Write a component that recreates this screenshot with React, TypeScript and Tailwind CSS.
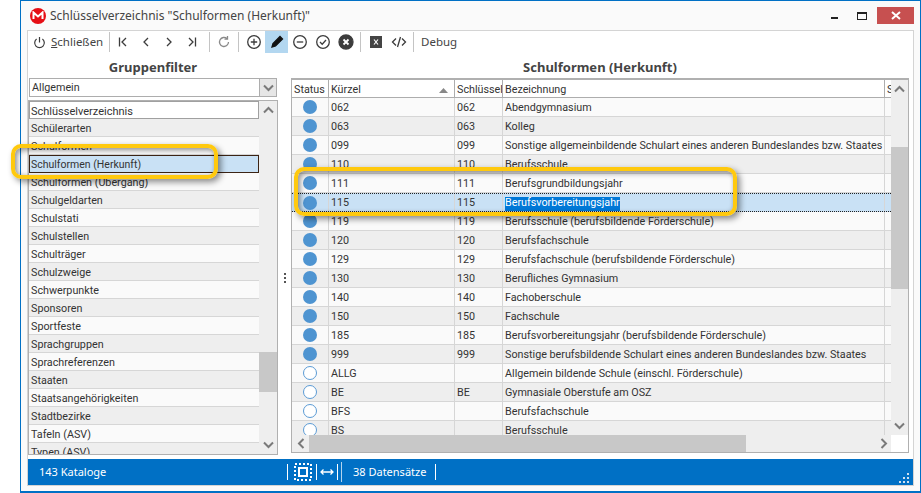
import React from "react";

const left = ["Schülerarten","Schulformen","Schulformen (Herkunft)","Schulformen (Übergang)","Schulgeldarten","Schulstati","Schulstellen","Schulträger","Schulzweige","Schwerpunkte","Sponsoren","Sportfeste","Sprachgruppen","Sprachreferenzen","Staaten","Staatsangehörigkeiten","Stadtbezirke","Tafeln (ASV)","Typen (ASV)"];

const rows: [boolean,string,string,string][] = [
[true,"062","062","Abendgymnasium"],
[true,"063","063","Kolleg"],
[true,"099","099","Sonstige allgemeinbildende Schulart eines anderen Bundeslandes bzw. Staates"],
[true,"110","110","Berufsschule"],
[true,"111","111","Berufsgrundbildungsjahr"],
[true,"115","115","Berufsvorbereitungsjahr"],
[true,"119","119","Berufsschule (berufsbildende Förderschule)"],
[true,"120","120","Berufsfachschule"],
[true,"129","129","Berufsfachschule (berufsbildende Förderschule)"],
[true,"130","130","Berufliches Gymnasium"],
[true,"140","140","Fachoberschule"],
[true,"150","150","Fachschule"],
[true,"185","185","Berufsvorbereitungsjahr (berufsbildende Förderschule)"],
[true,"999","999","Sonstige berufsbildende Schulart eines anderen Bundeslandes bzw. Staates"],
[false,"ALLG","","Allgemein bildende Schule (einschl. Förderschule)"],
[false,"BE","BE","Gymnasiale Oberstufe am OSZ"],
[false,"BFS","","Berufsfachschule"],
[false,"BS","","Berufsschule"],
];

const Sep = ({ c = "" }: { c?: string }) => <div className={`w-px h-[20px] bg-[#c4c4c4] ${c}`} />;
const Chev = ({ d }: { d: string }) => (
  <svg width="11" height="8" viewBox="0 0 11 8"><path d={d} fill="none" stroke="#7a7a7a" strokeWidth="2" /></svg>
);
const Ico = ({ children, w = 23, active = false }: { children: React.ReactNode; w?: number; active?: boolean }) => (
  <div className={`h-[22px] flex items-center justify-center ${active ? "bg-[#b3d7f0]" : ""}`} style={{ width: w }}>
    <svg width="16" height="16" viewBox="0 0 16 16" fill="none" stroke="#3c3c3c" strokeWidth="1.3">{children}</svg>
  </div>
);

const glow = "shadow-[3px_3px_6px_rgba(0,0,0,0.45),inset_3px_3px_5px_rgba(0,0,0,0.3),inset_0_0_4px_rgba(0,0,0,0.2)]";

export default function App() {
  return (
    <div className="relative w-[921px] h-[493px] overflow-hidden bg-white text-[10.75px] leading-none text-[#333] font-['Roboto',sans-serif]">
      <div className="ml-[20px] w-[901px] h-[493px] border border-[#0070c5] border-b-2 bg-[#fafafa] flex flex-col">
        {/* title */}
        <div className="h-[29px] flex items-center shrink-0 font-['Noto_Sans',sans-serif]">
          <div className="ml-[9px] w-[16px] h-[16px] rounded-full bg-[#e60f16] flex items-center justify-center">
            <svg width="12" height="9" viewBox="0 0 12 9"><path d="M1.5 8V1.5L6 5.5 10.5 1.5V8" fill="none" stroke="#fff" strokeWidth="2" /></svg>
          </div>
          <span className="ml-[4px] text-[12px] text-[#444]">Schlüsselverzeichnis "Schulformen (Herkunft)"</span>
          <div className="ml-auto flex items-center">
            <div className="w-[7px] h-[2px] mt-[5px] bg-[#222] mr-[19px]" />
            <div className="w-[8px] h-[5px] border border-[#222] border-t-2 mr-[10px] box-content" />
            <div className="w-[37px] h-[17px] bg-[#c75050] mr-[6px] flex items-center justify-center">
              <svg width="10" height="9" viewBox="0 0 10 9"><path d="M1 1l8 7M9 1L1 8" stroke="#fff" strokeWidth="2" /></svg>
            </div>
          </div>
        </div>
        {/* panel */}
        <div className="mx-[6px] w-[887px] h-[456px] border border-[#d4d4d4] bg-white flex flex-col shrink-0">
          {/* toolbar */}
          <div className="h-[22px] flex items-center shrink-0 font-['Noto_Sans',sans-serif]">
            <div className="flex items-center pl-[5px] w-[81px]">
              <svg width="13" height="13" viewBox="0 0 13 13" fill="none" stroke="#3c3c3c" strokeWidth="1.2"><path d="M6.5 1v5.5" /><path d="M3.6 3a4.8 4.8 0 1 0 5.8 0" /></svg>
              <span className="ml-[5px] text-[11.5px] text-[#444]"><u>S</u>chließen</span>
            </div>
            <Sep />
            <div className="flex items-center ml-[1px]">
              <Ico><path d="M4.5 3.5v9M11 4L7 8l4 4" /></Ico>
              <Ico><path d="M10 4L6 8l4 4" /></Ico>
              <Ico><path d="M6 4l4 4-4 4" /></Ico>
              <Ico><path d="M5 4l4 4-4 4M11.5 3.5v9" /></Ico>
            </div>
            <Sep c="ml-[6px]" />
            <Ico w={28}><path stroke="#8a8a8a" d="M12.5 8a4.5 4.5 0 1 1-1.4-3.3" /><path d="M11.5 2v3h-3" stroke="#8a8a8a" /></Ico>
            <Sep c="mr-[3px]" />
            <Ico w={23}><circle cx="8" cy="8" r="6.3" /><path d="M4.8 8h6.4M8 4.8v6.4" /></Ico>
            <Ico active><path d="M3 13l1-3.5 7-7 2.5 2.5-7 7z" fill="#111" stroke="#111" /></Ico>
            <Ico><circle cx="8" cy="8" r="6.3" /><path d="M4.8 8h6.4" /></Ico>
            <Ico><circle cx="8" cy="8" r="6.3" /><path d="M5 8l2.2 2.2L11 6" /></Ico>
            <Ico><circle cx="8" cy="8" r="7" fill="#3c3c3c" /><path d="M5.5 5.5l5 5M10.5 5.5l-5 5" stroke="#fff" strokeWidth="1.8" /></Ico>
            <Sep c="mx-[3px]" />
            <Ico><rect x="2" y="2" width="12" height="12" fill="#444" stroke="none" /><path d="M6 5.5l4 5M10 5.5l-4 5" stroke="#fff" strokeWidth="1.2" /></Ico>
            <Ico><path d="M5 4.5L1.5 8 5 11.5M11 4.5L14.5 8 11 11.5M9.5 3l-3 10" /></Ico>
            <Sep c="ml-[3px]" />
            <span className="ml-[7px] text-[11.5px] text-[#444]">Debug</span>
          </div>
          {/* body */}
          <div className="flex h-[402px] shrink-0">
            {/* left */}
            <div className="w-[250px] shrink-0 flex flex-col">
              <div className="h-[25px] flex items-center justify-center font-bold text-[13px] text-[#444] pt-[4px] font-['Noto_Sans',sans-serif]">Gruppenfilter</div>
              <div className="ml-[1px] h-[19px] w-[248px] border border-[#adadad] flex items-center justify-between">
                <span className="ml-[2px] mt-[2px] text-[#333]">Allgemein</span>
                <div className="w-[17px] h-[17px] bg-[#e6e6e6] border-l border-[#adadad] flex items-center justify-center">
                  <Chev d="M1 1.5l4.5 4.5L10 1.5" />
                </div>
              </div>
              <div className="mt-[3px] h-[355px] w-[250px] border border-[#b0b0b0] flex">
                <div className="flex-1 overflow-hidden">
                  <div className="h-[18px] border border-[#a0a0a0] bg-white flex items-center pl-[1px] pt-[3px] w-full text-[11px]">Schlüsselverzeichnis</div>
                  {left.map((t, i) => (
                    <div key={t} className={`h-[18px] flex items-center ${t === "Schulformen (Herkunft)" ? "bg-[#c9e1f5] border border-[#3c2415] pl-[1px] pt-[3px] text-[10.5px]" : i % 2 === 0 ? "bg-[#eeeeee] border-b border-[#d6d6d6] pl-[2px] pt-[4px]" : "bg-[#fafafa] border-b border-[#d6d6d6] pl-[2px] pt-[4px]"}`}>{t}</div>
                  ))}
                </div>
                <div className="w-[18px] bg-[#eeeeee] flex flex-col shrink-0">
                  <div className="h-[18px] flex items-center justify-center"><Chev d="M1 6.5L5.5 2 10 6.5" /></div>
                  <div className="h-[233px]" />
                  <div className="h-[40px] bg-[#c8c8c8]" />
                  <div className="flex-1" />
                  <div className="h-[18px] flex items-center justify-center"><Chev d="M1 1.5l4.5 4.5L10 1.5" /></div>
                </div>
              </div>
            </div>
            {/* splitter */}
            <div className="w-[13px] shrink-0 flex flex-col items-center justify-center gap-[2px] pt-[48px]">
              <i className="w-[2px] h-[2px] bg-[#555]" /><i className="w-[2px] h-[2px] bg-[#555]" /><i className="w-[2px] h-[2px] bg-[#555]" />
            </div>
            {/* right */}
            <div className="w-[618px] shrink-0 flex flex-col">
              <div className="h-[25px] flex items-center justify-center font-bold text-[13px] text-[#444] pt-[4px] font-['Noto_Sans',sans-serif]">Schulformen (Herkunft)</div>
              <div className="h-[375px] border border-[#b0b0b0] border-t-2 flex flex-col">
                <div className="flex flex-1 min-h-0">
                  <div className="flex-1 min-w-0 overflow-hidden">
                    <div className="flex h-[18px] bg-white border-b border-[#adadad] items-center">
                      <div className="w-[37px] pl-[2px] pt-[3px] border-r border-[#adadad] h-full flex items-center">Status</div>
                      <div className="w-[126px] pl-[2px] pt-[3px] border-r border-[#adadad] h-full flex items-center justify-between pr-[6px]">Kürzel
                        <svg width="9" height="5" viewBox="0 0 9 5"><path d="M0 5l4.5-5L9 5z" fill="#888" /></svg>
                      </div>
                      <div className="w-[48px] pl-[2px] pt-[3px] border-r border-[#adadad] h-full flex items-center whitespace-nowrap overflow-hidden">Schlüssel</div>
                      <div className="w-[382px] pl-[2px] pt-[3px] border-r border-[#adadad] h-full flex items-center">Bezeichnung</div>
                      <div className="flex-1 pl-[2px] pt-[3px] h-full flex items-center overflow-hidden">S</div>
                    </div>
                    {rows.map(([on, a, b, c], i) => {
                      const sel = a === "115";
                      const bg = sel ? "bg-[#c9e1f5]" : i % 2 === 0 ? "bg-[#fafafa]" : "bg-[#eeeeee]";
                      return (
                        <div key={a} className={`flex h-[19px] ${bg} ${sel ? "border-y border-dotted border-[#222]" : "border-b border-[#d6d6d6]"} items-center whitespace-nowrap`}>
                          <div className="w-[37px] h-full border-r border-[#d6d6d6] flex items-center justify-center">
                            <span className={`w-[14px] h-[14px] rounded-full ${on ? "bg-[#4e94d1]" : "border-[1.5px] border-[#5b9bd5] bg-white"}`} />
                          </div>
                          <div className="w-[126px] pl-[2px] pt-[2px] h-full border-r border-[#d6d6d6] flex items-center">{a}</div>
                          <div className="w-[48px] pl-[2px] pt-[2px] h-full border-r border-[#d6d6d6] flex items-center">{b}</div>
                          <div className="w-[382px] pl-[2px] pt-[2px] h-full border-r border-[#d6d6d6] flex items-center">
                            {sel ? <span className="bg-[#0078d7] text-white h-[14px] flex items-center">{c}</span> : c}
                          </div>
                          <div className="flex-1 h-full" />
                        </div>
                      );
                    })}
                  </div>
                  <div className="w-[17px] shrink-0 bg-[#eeeeee] flex flex-col">
                    <div className="h-[18px] flex items-center justify-center"><Chev d="M1 6.5L5.5 2 10 6.5" /></div>
                    <div className="h-[49px]" />
                    <div className="h-[142px] bg-[#c8c8c8]" />
                    <div className="flex-1" />
                    <div className="h-[18px] flex items-center justify-center"><Chev d="M1 1.5l4.5 4.5L10 1.5" /></div>
                  </div>
                </div>
                <div className="h-[17px] flex shrink-0">
                  <div className="w-[17px] bg-[#eeeeee] flex items-center justify-center"><svg width="8" height="11" viewBox="0 0 8 11"><path d="M6.5 1L2 5.5 6.5 10" fill="none" stroke="#7a7a7a" strokeWidth="2" /></svg></div>
                  <div className="w-[437px] bg-[#c8c8c8]" />
                  <div className="flex-1 bg-[#eeeeee] flex items-center justify-end pr-[3px]"><svg width="8" height="11" viewBox="0 0 8 11"><path d="M1.5 1L6 5.5 1.5 10" fill="none" stroke="#7a7a7a" strokeWidth="2" /></svg></div>
                  <div className="w-[17px] bg-white" />
                </div>
              </div>
            </div>
          </div>
          {/* status */}
          <div className="mt-[4px] h-[26px] bg-[#0070c5] text-white text-[11px] flex items-center relative shrink-0 font-['Noto_Sans',sans-serif]">
            <span className="ml-[11px] w-[248px] pb-[2px]">143 Kataloge</span>
            <div className="w-px h-[16px] bg-white" />
            <svg className="ml-[6px]" width="18" height="18" viewBox="0 0 18 18" fill="none" stroke="#fff"><rect x="1" y="1" width="16" height="16" strokeWidth="2" strokeDasharray="2 2" /><rect x="5" y="5" width="8" height="8" strokeWidth="2" /></svg>
            <div className="w-px h-[16px] bg-white ml-[4px]" />
            <svg className="ml-[3px]" width="14" height="8" viewBox="0 0 14 8" fill="none" stroke="#fff" strokeWidth="1.3"><path d="M1 4h12M3.5 1.5L1 4l2.5 2.5M10.5 1.5L13 4l-2.5 2.5" /></svg>
            <div className="w-px h-[16px] bg-white ml-[3px]" />
            <div className="w-px h-[20px] bg-white/70 ml-[3px]" />
            <span className="ml-[11px] pb-[2px]">38 Datensätze</span>
            <div className="w-px h-[16px] bg-white ml-[9px]" />
            <svg className="absolute right-[4px] bottom-[2px]" width="10" height="10" viewBox="0 0 10 10" fill="#cfe0f0"><rect x="8" y="0" width="2" height="2"/><rect x="4" y="4" width="2" height="2"/><rect x="8" y="4" width="2" height="2"/><rect x="0" y="8" width="2" height="2"/><rect x="4" y="8" width="2" height="2"/><rect x="8" y="8" width="2" height="2"/></svg>
          </div>
        </div>
      </div>
      {/* highlights */}
      <div className={`absolute left-[11px] top-[144px] w-[207px] h-[35px] rounded-[10px] border-[4px] border-[#ffc90e] ${glow}`} />
      <div className={`absolute left-[294px] top-[167px] w-[443px] h-[49px] rounded-[10px] border-[4px] border-[#ffc90e] ${glow}`} />
    </div>
  );
}
